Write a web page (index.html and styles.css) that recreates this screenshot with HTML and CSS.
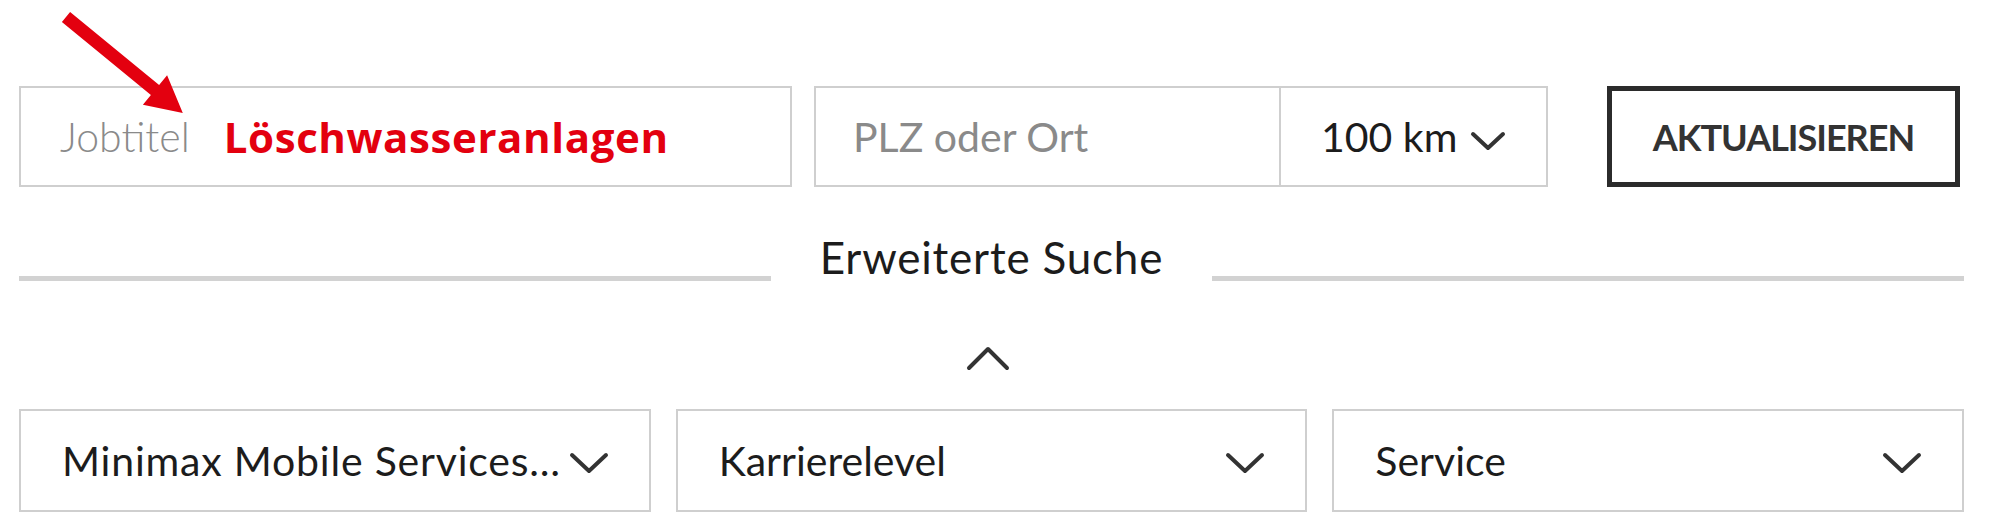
FILE: index.html
```html
<!DOCTYPE html>
<html lang="de">
<head>
<meta charset="utf-8">
<title>Jobsuche</title>
<link rel="stylesheet" href="styles.css">
</head>
<body>
<div class="page">
  <svg class="annot-arrow" width="200" height="130" viewBox="0 0 200 130" aria-hidden="true">
    <polygon points="61.9,25 70.1,15 159.1,88 167.1,78.3 182.8,115.9 142.9,107.7 150.9,98" fill="#e3000f"/>
  </svg>

  <div class="search-row">
    <div class="field field-job">
      <span class="placeholder light">Jobtitel</span>
      <span class="keyword">Löschwasseranlagen</span>
    </div>
    <div class="loc-group">
      <div class="field field-loc"><span class="placeholder">PLZ oder Ort</span></div>
      <div class="field field-radius">
        <span class="value">100 km</span>
        <svg class="chev chev-sm" viewBox="0 0 36 22" aria-hidden="true"><path d="M3 4 L18 18 L33 4"/></svg>
      </div>
    </div>
    <button class="btn-update">AKTUALISIEREN</button>
  </div>

  <div class="divider">
    <span class="divider-line"></span>
    <span class="divider-text">Erweiterte Suche</span>
    <span class="divider-line"></span>
  </div>

  <div class="toggle">
    <svg class="caret-up" viewBox="0 0 44 26" aria-hidden="true"><path d="M3 23 L22 4 L41 23"/></svg>
  </div>

  <div class="filter-row">
    <div class="field select">
      <span class="value wide">Minimax Mobile Services…</span>
      <svg class="chev" viewBox="0 0 40 24" aria-hidden="true"><path d="M3 4 L20 20 L37 4"/></svg>
    </div>
    <div class="field select">
      <span class="value">Karrierelevel</span>
      <svg class="chev" viewBox="0 0 40 24" aria-hidden="true"><path d="M3 4 L20 20 L37 4"/></svg>
    </div>
    <div class="field select">
      <span class="value">Service</span>
      <svg class="chev" viewBox="0 0 40 24" aria-hidden="true"><path d="M3 4 L20 20 L37 4"/></svg>
    </div>
  </div>
</div>
</body>
</html>
```

FILE: styles.css
```css
* { box-sizing: border-box; }

html, body {
  margin: 0;
  background: #ffffff;
}

body {
  font-family: Lato, "Open Sans", sans-serif;
  color: #1c1c1c;
}

.page {
  position: relative;
  width: 2000px;
  height: 532px;
  padding: 86px 36px 0 19px;
}

.annot-arrow {
  position: absolute;
  left: 0;
  top: -3px;
  z-index: 2;
}

/* ---------- Row 1 ---------- */
.search-row {
  display: flex;
  align-items: stretch;
  height: 101px;
}

.field {
  display: flex;
  align-items: center;
  border: 2px solid #cfcfcf;
  background: #fff;
  font-size: 41px;
  white-space: nowrap;
}

.field-job {
  width: 773px;
  padding-left: 39px;
}

.placeholder {
  color: #8a8a8a;
}

.placeholder.light {
  font-weight: 300;
}

.keyword {
  margin-left: 34px;
  font-family: "Open Sans", sans-serif;
  font-weight: 700;
  font-size: 42px;
  color: #e3000f;
  letter-spacing: 0.6px;
}

.loc-group {
  display: flex;
  margin-left: 22px;
}

.field-loc {
  width: 467px;
  padding-left: 37px;
}

.field-radius {
  width: 267px;
  border-left: none;
  padding-left: 40px;
}

.chev {
  width: 40px;
  height: 24px;
  flex: none;
}

.chev path,
.caret-up path {
  fill: none;
  stroke: #333;
  stroke-width: 4;
  stroke-linecap: round;
  stroke-linejoin: round;
}

.chev-sm {
  width: 36px;
  height: 22px;
  margin-left: 13px;
  margin-top: 8px;
}

.btn-update {
  width: 353px;
  margin-left: 59px;
  border: 5px solid #2b2b2b;
  background: #fff;
  font-family: Lato, sans-serif;
  font-weight: 700;
  font-size: 36px;
  letter-spacing: -1px;
  color: #333;
  padding: 0;
}

/* ---------- Divider ---------- */
.divider {
  display: flex;
  align-items: flex-end;
  margin-top: 45px;
  height: 50px;
  width: 1945px;
}

.divider-line {
  flex: 1;
  height: 5px;
  margin-bottom: 1px;
  background: #d2d2d2;
}

.divider-text {
  font-size: 44px;
  line-height: 50px;
  letter-spacing: 0.8px;
  margin: 0 49px;
  color: #1c1c1c;
}

/* ---------- Toggle caret ---------- */
.toggle {
  display: flex;
  justify-content: center;
  width: 1945px;
  margin-top: 63px;
}

.caret-up {
  width: 44px;
  height: 26px;
  margin-right: 8px;
}

/* ---------- Filter row ---------- */
.filter-row {
  display: grid;
  grid-template-columns: repeat(3, 1fr);
  column-gap: 25px;
  width: 1945px;
  height: 103px;
  margin-top: 38px;
}

.select {
  justify-content: space-between;
  padding: 0 40px 0 41px;
}

.select .value.wide {
  letter-spacing: 0.8px;
}

.select .chev {
  margin-top: 4px;
}
```
